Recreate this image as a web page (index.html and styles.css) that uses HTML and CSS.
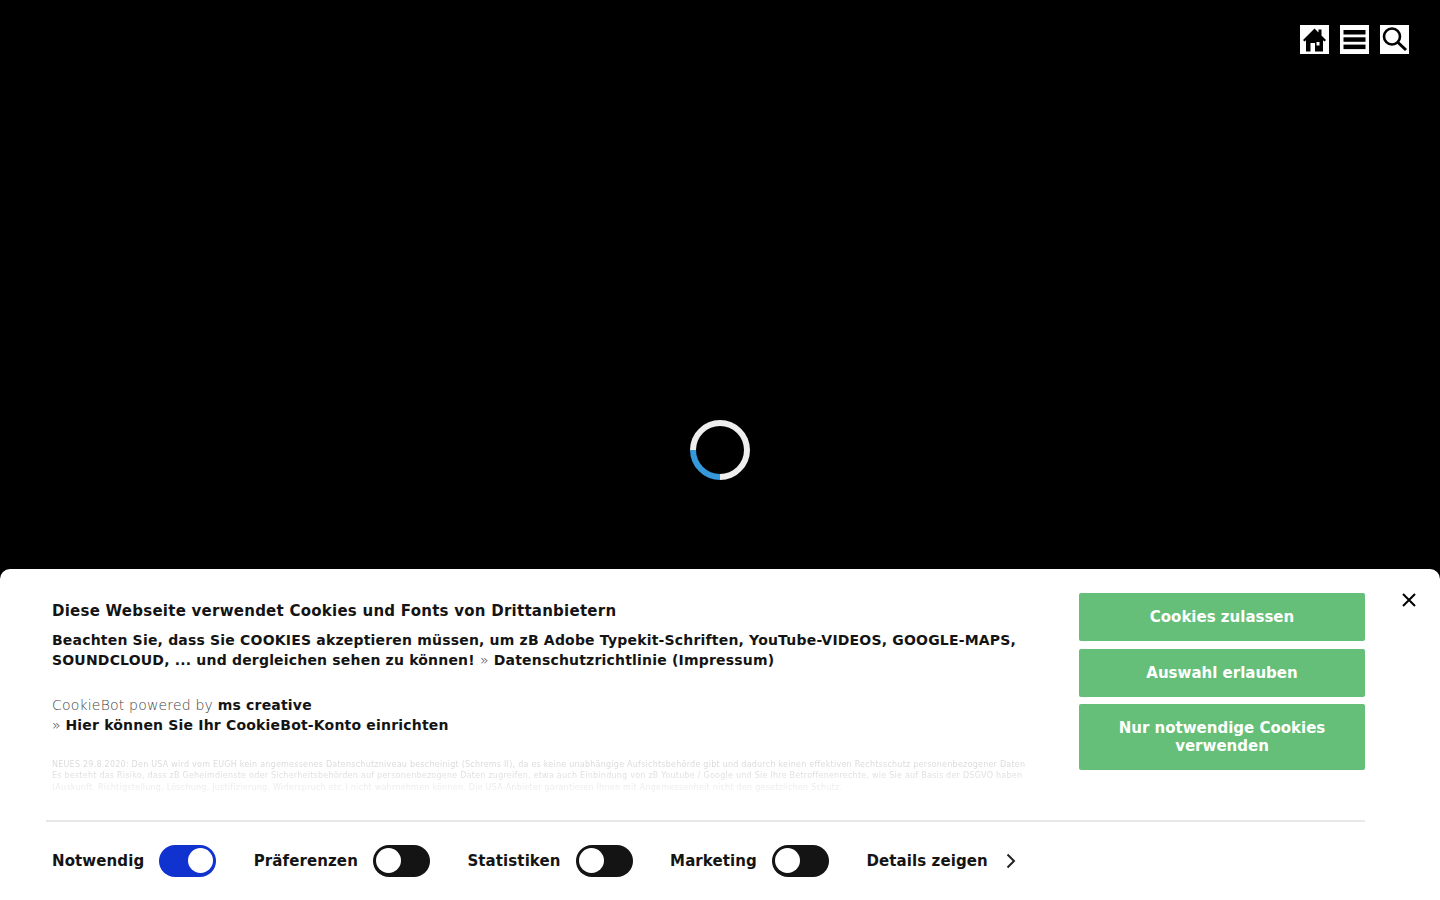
FILE: index.html
```html
<!DOCTYPE html>
<html lang="de">
<head>
    <meta charset="UTF-8">
    <meta name="viewport" content="width=device-width, initial-scale=1.0">
    <title>ms creative</title>
    <link rel="stylesheet" href="styles.css">
</head>
<body>

    <!-- Top right navigation icons -->
    <nav class="topnav">
        <a class="nav-btn" href="#" aria-label="Home">
            <svg width="29" height="29" viewBox="0 0 29 29">
                <path d="M3 15 L14.5 3.5 L18.5 7.5 V4.5 H21.5 V10.5 L26 15 L24.5 16.5 L23 15.2 V26.5 H15 V18 H10.5 V26.5 H6 V15.2 L4.5 16.5 Z M16.5 17 V20.5 H19.5 V17 Z" fill="#000" fill-rule="evenodd"/>
            </svg>
        </a>
        <a class="nav-btn" href="#" aria-label="Menu">
            <svg width="29" height="29" viewBox="0 0 29 29">
                <rect x="3.5" y="5" width="22" height="4.5" fill="#000"/>
                <rect x="3.5" y="12.3" width="22" height="4.5" fill="#000"/>
                <rect x="3.5" y="19.6" width="22" height="4.5" fill="#000"/>
            </svg>
        </a>
        <a class="nav-btn" href="#" aria-label="Suche">
            <svg width="29" height="29" viewBox="0 0 29 29">
                <circle cx="12" cy="11.5" r="8" fill="none" stroke="#000" stroke-width="2.6"/>
                <path d="M18 17.5 L26 25" stroke="#000" stroke-width="3" fill="none"/>
            </svg>
        </a>
    </nav>

    <!-- Page loader -->
    <div class="loader"></div>

    <!-- Cookie dialog -->
    <div class="cookie-dialog">
        <button class="cookie-close" aria-label="Schließen">
            <svg width="16" height="16" viewBox="0 0 16 16">
                <path d="M2 2 L14 14 M14 2 L2 14" stroke="#000" stroke-width="2" fill="none"/>
            </svg>
        </button>

        <div class="cookie-top">
            <div class="cookie-text">
                <h2>Diese Webseite verwendet Cookies und Fonts von Drittanbietern</h2>
                <p class="cookie-strong">Beachten Sie, dass Sie COOKIES akzeptieren müssen, um zB Adobe Typekit-Schriften, YouTube-VIDEOS, GOOGLE-MAPS, SOUNDCLOUD, ... und dergleichen sehen zu können! <span class="light">»</span> Datenschutzrichtlinie (Impressum)</p>
                <p class="cookie-powered"><span class="light">CookieBot powered by</span> <b>ms creative</b><br><span class="light">»</span> <b>Hier können Sie Ihr CookieBot-Konto einrichten</b></p>
                <p class="cookie-fine">NEUES 29.8.2020: Den USA wird vom EUGH kein angemessenes Datenschutzniveau bescheinigt (Schrems II), da es keine unabhängige Aufsichtsbehörde gibt und dadurch keinen effektiven Rechtsschutz personenbezogener Daten<br>Es besteht das Risiko, dass zB Geheimdienste oder Sicherheitsbehörden auf personenbezogene Daten zugreifen, etwa auch Einbindung von zB Youtube / Google und Sie Ihre Betroffenenrechte, wie Sie auf Basis der DSGVO haben<br>(Auskunft, Richtigstellung, Löschung, Justifizierung, Widerspruch etc.) nicht wahrnehmen können. Die USA-Anbieter garantieren Ihnen mit Angemessenheit nicht den gesetzlichen Schutz.</p>
            </div>
            <div class="cookie-buttons">
                <button class="cookie-btn">Cookies zulassen</button>
                <button class="cookie-btn">Auswahl erlauben</button>
                <button class="cookie-btn tall">Nur notwendige Cookies verwenden</button>
            </div>
        </div>

        <div class="cookie-bottom">
            <div class="toggle-row">
                <span class="toggle-label">Notwendig</span>
                <span class="toggle on"></span>
            </div>
            <div class="toggle-row">
                <span class="toggle-label">Präferenzen</span>
                <span class="toggle"></span>
            </div>
            <div class="toggle-row">
                <span class="toggle-label">Statistiken</span>
                <span class="toggle"></span>
            </div>
            <div class="toggle-row">
                <span class="toggle-label">Marketing</span>
                <span class="toggle"></span>
            </div>
            <a class="details" href="#">Details zeigen
                <svg width="10" height="16" viewBox="0 0 10 16">
                    <path d="M1.5 1.5 L8 8 L1.5 14.5" stroke="#222" stroke-width="2" fill="none"/>
                </svg>
            </a>
        </div>
    </div>

</body>
</html>
```

FILE: styles.css
```css
html, body {
    margin: 0;
    padding: 0;
    height: 100%;
    overflow: hidden;
}

body {
    background-color: #000;
    font-family: "DejaVu Sans", sans-serif;
    color: #141414;
}

.topnav {
    display: flex;
    justify-content: flex-end;
    gap: 11px;
    padding: 25px 31px 0 0;
}

.nav-btn {
    display: block;
    width: 29px;
    height: 29px;
    background-color: #fff;
}

.nav-btn svg {
    display: block;
}

/* Spinner sits in the middle of the viewport */
.loader {
    position: absolute;
    top: 420px;
    left: 690px;
    width: 60px;
    height: 60px;
    box-sizing: border-box;
    border-radius: 50%;
    border: 6px solid #eee;
    border-left-color: #3498db;
    transform: rotate(-45deg);
}

.cookie-dialog {
    position: absolute;
    left: 0;
    right: 0;
    bottom: 0;
    height: 331.5px;
    box-sizing: border-box;
    padding: 24px 75px 0 52px;
    background-color: #fff;
    border-radius: 10px 10px 0 0;
}

.cookie-close {
    position: absolute;
    top: 23px;
    right: 23px;
    width: 16px;
    height: 16px;
    padding: 0;
    border: none;
    background: none;
}

.cookie-close svg {
    display: block;
}

.cookie-top {
    display: flex;
    justify-content: space-between;
    height: 227px;
}

.cookie-text {
    width: 980px;
    font-size: 14px;
    line-height: 20px;
    letter-spacing: 0.19px;
}

.cookie-text h2 {
    margin: 8px 0 9px;
    font-size: 15px;
    line-height: 20px;
    font-weight: bold;
    letter-spacing: 0.25px;
}

.cookie-text p {
    margin: 0;
}

.cookie-strong {
    font-weight: bold;
}

.light {
    font-weight: 200;
    color: #444;
}

.cookie-powered {
    padding-top: 25px;
}

/* Small print fades out towards the bottom */
.cookie-text .cookie-fine {
    margin-top: 24px;
    height: 36px;
    overflow: hidden;
    white-space: nowrap;
    font-size: 8px;
    line-height: 11.5px;
    letter-spacing: 0.24px;
    color: #dcdcdc;
    -webkit-mask-image: linear-gradient(to bottom, #000 30%, rgba(0, 0, 0, 0.3) 100%);
    mask-image: linear-gradient(to bottom, #000 30%, rgba(0, 0, 0, 0.3) 100%);
}

.cookie-buttons {
    display: flex;
    flex-direction: column;
    gap: 8px;
    width: 286px;
}

.cookie-btn {
    height: 48px;
    padding: 0 30px;
    border: none;
    border-radius: 2px;
    background-color: #65bf78;
    color: #fff;
    font-family: inherit;
    font-size: 15px;
    font-weight: bold;
    line-height: 18px;
}

.cookie-btn.tall {
    height: 66px;
    margin-top: -0.8px;
}

.cookie-bottom {
    display: flex;
    align-items: center;
    gap: 37.5px;
    margin-left: -6px;
    padding: 23px 0 0 6px;
    border-top: 2px solid #e8e8e8;
    font-size: 15px;
    font-weight: bold;
    letter-spacing: 0.1px;
}

.toggle-row {
    display: flex;
    align-items: center;
    gap: 15px;
}

.toggle {
    display: flex;
    align-items: center;
    justify-content: flex-start;
    width: 57px;
    height: 32px;
    box-sizing: border-box;
    padding: 0 3px;
    border-radius: 16px;
    background-color: #141414;
}

.toggle::before {
    content: "";
    width: 25px;
    height: 25px;
    border-radius: 50%;
    background-color: #fff;
}

.toggle.on {
    justify-content: flex-end;
    background-color: #1032cf;
}

.details {
    display: flex;
    align-items: center;
    gap: 18px;
    color: #141414;
    text-decoration: none;
}
```
